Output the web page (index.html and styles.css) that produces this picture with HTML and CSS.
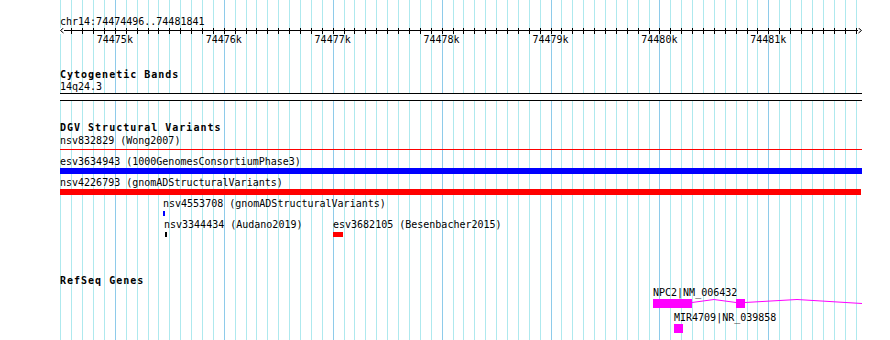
FILE: index.html
```html
<!DOCTYPE html>
<html lang="en">
<head>
    <meta charset="UTF-8">
    <title>chr14:74474496..74481841</title>
    <link rel="stylesheet" href="styles.css">
</head>
<body>
    <div class="browser">
        <div class="locus">chr14:74474496..74481841</div>
        <div class="scale">
            <svg class="arrow arrow-left" width="4" height="6" viewBox="0 0 4 6">
                <polyline points="3.5,0 0.5,2.5 3.5,5" />
            </svg>
            <svg class="arrow arrow-right" width="4" height="6" viewBox="0 0 4 6">
                <polyline points="0.5,0 3.5,2.5 0.5,5" />
            </svg>
        </div>
        <div class="scale-labels">
            <span>74475k</span>
            <span>74476k</span>
            <span>74477k</span>
            <span>74478k</span>
            <span>74479k</span>
            <span>74480k</span>
            <span>74481k</span>
        </div>

        <section class="track track-bands">
            <h2 class="track-label">Cytogenetic Bands</h2>
            <div class="feature-label">14q24.3</div>
            <div class="band"></div>
        </section>

        <section class="track track-dgv">
            <h2 class="track-label">DGV Structural Variants</h2>
            <div class="feature-label sv-first">nsv832829 (Wong2007)</div>
            <div class="sv-line"></div>
            <div class="feature-label sv-label">esv3634943 (1000GenomesConsortiumPhase3)</div>
            <div class="sv-bar sv-blue"></div>
            <div class="feature-label sv-label">nsv4226793 (gnomADStructuralVariants)</div>
            <div class="sv-bar sv-red"></div>

            <div class="sv-row">
                <div class="sv-item" style="left: 103px">
                    <div class="feature-label">nsv4553708 (gnomADStructuralVariants)</div>
                    <div class="sv-tick sv-blue" style="width: 2px"></div>
                </div>
            </div>
            <div class="sv-row">
                <div class="sv-item" style="left: 104px">
                    <div class="feature-label">nsv3344434 (Audano2019)</div>
                    <div class="sv-tick sv-black" style="width: 2px; margin-left: 1px"></div>
                </div>
                <div class="sv-item" style="left: 273px">
                    <div class="feature-label">esv3682105 (Besenbacher2015)</div>
                    <div class="sv-tick sv-red" style="width: 10px"></div>
                </div>
            </div>
        </section>

        <section class="track track-genes">
            <h2 class="track-label">RefSeq Genes</h2>
            <div class="feature-label gene-npc2">NPC2|NM_006432</div>
            <svg class="gene-model" width="802" height="9" viewBox="0 0 802 9">
                <rect x="593" y="0" width="39" height="9" />
                <rect x="676" y="0" width="9" height="9" />
                <polyline points="632,3.5 654,0.5 676,3.5" />
                <polyline points="685,3.5 737,0.5 802,4.5" />
            </svg>
            <div class="gene-mir">
                <div class="feature-label">MIR4709|NR_039858</div>
                <div class="mir-box"></div>
            </div>
        </section>
    </div>
</body>
</html>
```

FILE: styles.css
```css
body {
    margin: 0;
    background-color: #ffffff;
    color: #000000;
    font-family: "DejaVu Sans Mono", monospace;
    font-size: 10px;
    line-height: 11px;
}

.browser {
    box-sizing: border-box;
    width: 802px;
    height: 340px;
    margin-left: 60px;
    padding-top: 16px;
    overflow: hidden;
    background-color: #ffffff;
    background-image:
        repeating-linear-gradient(90deg, #8ecbea 54.86px, #8ecbea 55.86px, transparent 55.86px, transparent 163.78px),
        repeating-linear-gradient(90deg, #aee9ee 0.4px, #aee9ee 1.4px, transparent 1.4px, transparent 11.292px);
}

/* ruler */
.scale {
    position: relative;
    width: 801px;
    height: 6px;
    margin-top: 1px;
    background-image: repeating-linear-gradient(90deg, #000000 0.4px, #000000 1.4px, transparent 1.4px, transparent 11.292px);
}

.scale::before {
    content: "";
    position: absolute;
    left: 0;
    right: 0;
    top: 2px;
    height: 1px;
    background-color: #000000;
}

.arrow {
    position: absolute;
    top: 0;
    background-color: #ffffff;
}

.arrow polyline {
    fill: none;
    stroke: #000000;
    stroke-width: 1;
}

.arrow-left {
    left: 0;
}

.arrow-right {
    right: -1px;
}

.scale-labels {
    display: flex;
    padding-left: 0.4px;
}

.scale-labels span {
    flex: 0 0 108.92px;
    text-align: center;
}

/* tracks */
.track-label {
    margin: 0;
    font-size: 10px;
    font-weight: bold;
    letter-spacing: 1px;
    line-height: 11px;
}

.feature-label {
    position: relative;
    white-space: nowrap;
}

.track-bands {
    margin-top: 24px;
}

.track-bands .feature-label {
    margin-top: 1px;
}

.band {
    height: 6px;
    margin-top: 1px;
    border-top: 1px solid #000000;
    border-bottom: 1px solid #000000;
    background-color: #ffffff;
}

.track-dgv {
    margin-top: 21px;
}

.sv-first {
    margin-top: 2px;
}

.sv-line {
    height: 1px;
    margin-top: 3px;
    background-color: #ff0000;
}

.sv-label {
    margin-top: 6px;
}

.sv-label + .sv-bar {
    margin-top: 1px;
}

.sv-bar {
    height: 6px;
}

.sv-bar.sv-blue {
    width: 804px;
    margin-left: -2px;
}

.sv-bar.sv-red {
    width: 801px;
}

.sv-bar + .sv-label {
    margin-top: 3px;
}

.sv-blue {
    background-color: #0000ff;
}

.sv-red {
    background-color: #ff0000;
}

.sv-black {
    background-color: #000000;
}

.sv-row {
    position: relative;
    height: 18px;
    margin-top: 3px;
}

.sv-item {
    position: absolute;
    top: 0;
}

.sv-tick {
    height: 5px;
    margin-top: 2px;
}

.track-genes {
    margin-top: 38px;
}

.gene-npc2 {
    margin-top: 1px;
    margin-left: 593px;
}

.gene-model {
    display: block;
    margin-top: 1px;
}

.gene-model rect {
    fill: #ff00ff;
}

.gene-model polyline {
    fill: none;
    stroke: #ff00ff;
    stroke-width: 1;
}

.gene-mir {
    margin-top: 4px;
    margin-left: 614px;
}

.mir-box {
    width: 9px;
    height: 9px;
    margin-top: 1px;
    background-color: #ff00ff;
}
```
